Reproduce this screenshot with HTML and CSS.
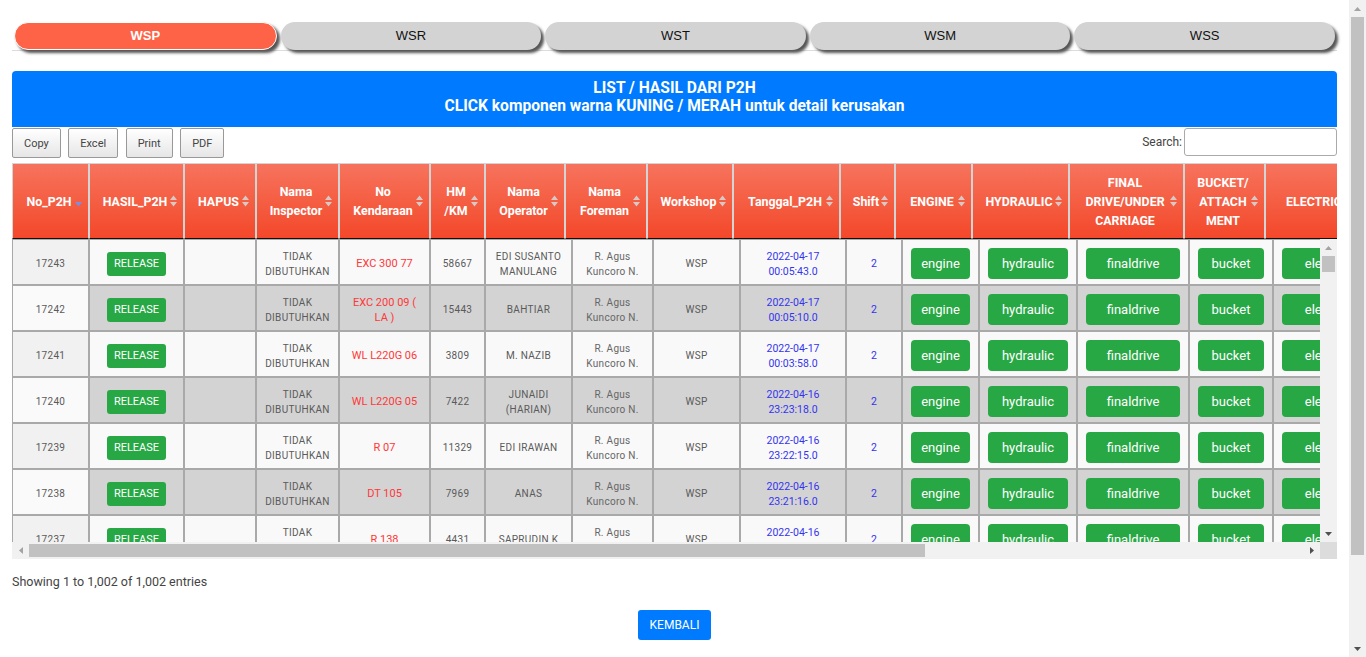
FILE: index.html
```html
<!DOCTYPE html>
<html>
<head>
<meta charset="utf-8">
<title>P2H</title>
<link rel="stylesheet" href="styles.css">
</head>
<body>
<div class="page">
  <nav class="tabs">
    <a class="tab active">WSP</a>
    <a class="tab">WSR</a>
    <a class="tab">WST</a>
    <a class="tab">WSM</a>
    <a class="tab">WSS</a>
  </nav>

  <div class="banner">LIST / HASIL DARI P2H<br>CLICK komponen warna KUNING / MERAH untuk detail kerusakan</div>

  <div class="toolbar">
    <div class="dt-buttons">
      <button class="dt-btn">Copy</button>
      <button class="dt-btn">Excel</button>
      <button class="dt-btn">Print</button>
      <button class="dt-btn">PDF</button>
    </div>
    <label class="search">Search:<input class="search-input" type="search"></label>
  </div>

  <div class="scroll-head">
    <table class="head-table">
      <colgroup><col><col><col><col><col><col><col><col><col><col><col><col><col><col><col><col></colgroup>
      <thead>
        <tr>
          <th><div class="hc"><span class="hl">No_P2H</span><svg class="sort" width="7" height="12" viewBox="0 0 7 12"><path d="M0 7h7l-3.5 4.5z" fill="#7d8de0"/></svg></div></th>
          <th><div class="hc"><span class="hl">HASIL_P2H</span><svg class="sort" width="7" height="12" viewBox="0 0 7 12"><path d="M0 5h7L3.5 .5z M0 7h7l-3.5 4.5z" fill="#d9c9c6"/></svg></div></th>
          <th><div class="hc"><span class="hl">HAPUS</span><svg class="sort" width="7" height="12" viewBox="0 0 7 12"><path d="M0 5h7L3.5 .5z M0 7h7l-3.5 4.5z" fill="#d9c9c6"/></svg></div></th>
          <th><div class="hc"><span class="hl">Nama<br>Inspector</span><svg class="sort" width="7" height="12" viewBox="0 0 7 12"><path d="M0 5h7L3.5 .5z M0 7h7l-3.5 4.5z" fill="#d9c9c6"/></svg></div></th>
          <th><div class="hc"><span class="hl">No<br>Kendaraan</span><svg class="sort" width="7" height="12" viewBox="0 0 7 12"><path d="M0 5h7L3.5 .5z M0 7h7l-3.5 4.5z" fill="#d9c9c6"/></svg></div></th>
          <th><div class="hc"><span class="hl">HM<br>/KM</span><svg class="sort" width="7" height="12" viewBox="0 0 7 12"><path d="M0 5h7L3.5 .5z M0 7h7l-3.5 4.5z" fill="#d9c9c6"/></svg></div></th>
          <th><div class="hc"><span class="hl">Nama<br>Operator</span><svg class="sort" width="7" height="12" viewBox="0 0 7 12"><path d="M0 5h7L3.5 .5z M0 7h7l-3.5 4.5z" fill="#d9c9c6"/></svg></div></th>
          <th><div class="hc"><span class="hl">Nama<br>Foreman</span><svg class="sort" width="7" height="12" viewBox="0 0 7 12"><path d="M0 5h7L3.5 .5z M0 7h7l-3.5 4.5z" fill="#d9c9c6"/></svg></div></th>
          <th><div class="hc"><span class="hl">Workshop</span><svg class="sort" width="7" height="12" viewBox="0 0 7 12"><path d="M0 5h7L3.5 .5z M0 7h7l-3.5 4.5z" fill="#d9c9c6"/></svg></div></th>
          <th><div class="hc"><span class="hl">Tanggal_P2H</span><svg class="sort" width="7" height="12" viewBox="0 0 7 12"><path d="M0 5h7L3.5 .5z M0 7h7l-3.5 4.5z" fill="#d9c9c6"/></svg></div></th>
          <th><div class="hc"><span class="hl">Shift</span><svg class="sort" width="7" height="12" viewBox="0 0 7 12"><path d="M0 5h7L3.5 .5z M0 7h7l-3.5 4.5z" fill="#d9c9c6"/></svg></div></th>
          <th><div class="hc"><span class="hl">ENGINE</span><svg class="sort" width="7" height="12" viewBox="0 0 7 12"><path d="M0 5h7L3.5 .5z M0 7h7l-3.5 4.5z" fill="#d9c9c6"/></svg></div></th>
          <th><div class="hc"><span class="hl">HYDRAULIC</span><svg class="sort" width="7" height="12" viewBox="0 0 7 12"><path d="M0 5h7L3.5 .5z M0 7h7l-3.5 4.5z" fill="#d9c9c6"/></svg></div></th>
          <th><div class="hc"><span class="hl">FINAL<br>DRIVE/UNDER<br>CARRIAGE</span><svg class="sort" width="7" height="12" viewBox="0 0 7 12"><path d="M0 5h7L3.5 .5z M0 7h7l-3.5 4.5z" fill="#d9c9c6"/></svg></div></th>
          <th><div class="hc"><span class="hl">BUCKET/<br>ATTACH<br>MENT</span><svg class="sort" width="7" height="12" viewBox="0 0 7 12"><path d="M0 5h7L3.5 .5z M0 7h7l-3.5 4.5z" fill="#d9c9c6"/></svg></div></th>
          <th><div class="hc"><span class="hl">ELECTRIC</span><svg class="sort" width="7" height="12" viewBox="0 0 7 12"><path d="M0 5h7L3.5 .5z M0 7h7l-3.5 4.5z" fill="#d9c9c6"/></svg></div></th>
        </tr>
      </thead>
    </table>
  </div>

  <div class="scroll-body">
    <div class="body-view">
      <table class="body-table">
        <colgroup><col><col><col><col><col><col><col><col><col><col><col><col><col><col><col><col></colgroup>
        <tbody>
          <tr class="odd">
            <td class="sorted">17243</td>
            <td><button class="btn-release">RELEASE</button></td>
            <td></td>
            <td>TIDAK<br>DIBUTUHKAN</td>
            <td class="red">EXC 300 77</td>
            <td>58667</td>
            <td>EDI SUSANTO<br>MANULANG</td>
            <td class="soft">R. Agus<br>Kuncoro N.</td>
            <td>WSP</td>
            <td class="blue">2022-04-17<br>00:05:43.0</td>
            <td class="blue">2</td>
            <td><button class="btn-comp">engine</button></td>
            <td><button class="btn-comp">hydraulic</button></td>
            <td><button class="btn-comp">finaldrive</button></td>
            <td><button class="btn-comp">bucket</button></td>
            <td><button class="btn-comp">electric</button></td>
          </tr>
          <tr class="even">
            <td class="sorted">17242</td>
            <td><button class="btn-release">RELEASE</button></td>
            <td></td>
            <td>TIDAK<br>DIBUTUHKAN</td>
            <td class="red">EXC 200 09 (<br>LA )</td>
            <td>15443</td>
            <td>BAHTIAR</td>
            <td class="soft">R. Agus<br>Kuncoro N.</td>
            <td>WSP</td>
            <td class="blue">2022-04-17<br>00:05:10.0</td>
            <td class="blue">2</td>
            <td><button class="btn-comp">engine</button></td>
            <td><button class="btn-comp">hydraulic</button></td>
            <td><button class="btn-comp">finaldrive</button></td>
            <td><button class="btn-comp">bucket</button></td>
            <td><button class="btn-comp">electric</button></td>
          </tr>
          <tr class="odd">
            <td class="sorted">17241</td>
            <td><button class="btn-release">RELEASE</button></td>
            <td></td>
            <td>TIDAK<br>DIBUTUHKAN</td>
            <td class="red">WL L220G 06</td>
            <td>3809</td>
            <td>M. NAZIB</td>
            <td class="soft">R. Agus<br>Kuncoro N.</td>
            <td>WSP</td>
            <td class="blue">2022-04-17<br>00:03:58.0</td>
            <td class="blue">2</td>
            <td><button class="btn-comp">engine</button></td>
            <td><button class="btn-comp">hydraulic</button></td>
            <td><button class="btn-comp">finaldrive</button></td>
            <td><button class="btn-comp">bucket</button></td>
            <td><button class="btn-comp">electric</button></td>
          </tr>
          <tr class="even">
            <td class="sorted">17240</td>
            <td><button class="btn-release">RELEASE</button></td>
            <td></td>
            <td>TIDAK<br>DIBUTUHKAN</td>
            <td class="red">WL L220G 05</td>
            <td>7422</td>
            <td>JUNAIDI<br>(HARIAN)</td>
            <td class="soft">R. Agus<br>Kuncoro N.</td>
            <td>WSP</td>
            <td class="blue">2022-04-16<br>23:23:18.0</td>
            <td class="blue">2</td>
            <td><button class="btn-comp">engine</button></td>
            <td><button class="btn-comp">hydraulic</button></td>
            <td><button class="btn-comp">finaldrive</button></td>
            <td><button class="btn-comp">bucket</button></td>
            <td><button class="btn-comp">electric</button></td>
          </tr>
          <tr class="odd">
            <td class="sorted">17239</td>
            <td><button class="btn-release">RELEASE</button></td>
            <td></td>
            <td>TIDAK<br>DIBUTUHKAN</td>
            <td class="red">R 07</td>
            <td>11329</td>
            <td>EDI IRAWAN</td>
            <td class="soft">R. Agus<br>Kuncoro N.</td>
            <td>WSP</td>
            <td class="blue">2022-04-16<br>23:22:15.0</td>
            <td class="blue">2</td>
            <td><button class="btn-comp">engine</button></td>
            <td><button class="btn-comp">hydraulic</button></td>
            <td><button class="btn-comp">finaldrive</button></td>
            <td><button class="btn-comp">bucket</button></td>
            <td><button class="btn-comp">electric</button></td>
          </tr>
          <tr class="even">
            <td class="sorted">17238</td>
            <td><button class="btn-release">RELEASE</button></td>
            <td></td>
            <td>TIDAK<br>DIBUTUHKAN</td>
            <td class="red">DT 105</td>
            <td>7969</td>
            <td>ANAS</td>
            <td class="soft">R. Agus<br>Kuncoro N.</td>
            <td>WSP</td>
            <td class="blue">2022-04-16<br>23:21:16.0</td>
            <td class="blue">2</td>
            <td><button class="btn-comp">engine</button></td>
            <td><button class="btn-comp">hydraulic</button></td>
            <td><button class="btn-comp">finaldrive</button></td>
            <td><button class="btn-comp">bucket</button></td>
            <td><button class="btn-comp">electric</button></td>
          </tr>
          <tr class="odd">
            <td class="sorted">17237</td>
            <td><button class="btn-release">RELEASE</button></td>
            <td></td>
            <td>TIDAK<br>DIBUTUHKAN</td>
            <td class="red">R 138</td>
            <td>4431</td>
            <td>SAPRUDIN K</td>
            <td class="soft">R. Agus<br>Kuncoro N.</td>
            <td>WSP</td>
            <td class="blue">2022-04-16<br>23:20:10.0</td>
            <td class="blue">2</td>
            <td><button class="btn-comp">engine</button></td>
            <td><button class="btn-comp">hydraulic</button></td>
            <td><button class="btn-comp">finaldrive</button></td>
            <td><button class="btn-comp">bucket</button></td>
            <td><button class="btn-comp">electric</button></td>
          </tr>
        </tbody>
      </table>
    </div>
    <div class="vbar">
      <div class="arrow"><svg width="7" height="4" viewBox="0 0 7 4"><path d="M0 4h7L3.5 0z" fill="#a3a3a3"/></svg></div>
      <div class="vthumb"></div>
      <div class="track"></div>
      <div class="arrow"><svg width="7" height="4" viewBox="0 0 7 4"><path d="M0 0h7L3.5 4z" fill="#505050"/></svg></div>
    </div>
    <div class="hbar">
      <div class="arrow"><svg width="4" height="7" viewBox="0 0 4 7"><path d="M4 0v7L0 3.5z" fill="#a3a3a3"/></svg></div>
      <div class="hthumb"></div>
      <div class="track"></div>
      <div class="arrow"><svg width="4" height="7" viewBox="0 0 4 7"><path d="M0 0v7L4 3.5z" fill="#505050"/></svg></div>
    </div>
    <div class="corner"></div>
  </div>

  <div class="info">Showing 1 to 1,002 of 1,002 entries</div>

  <div class="actions"><button class="kembali">KEMBALI</button></div>
</div>

<div class="page-scroll">
  <div class="arrow"><svg width="7" height="4" viewBox="0 0 7 4"><path d="M0 4h7L3.5 0z" fill="#a3a3a3"/></svg></div>
  <div class="pthumb"></div>
  <div class="track"></div>
  <div class="arrow"><svg width="7" height="4" viewBox="0 0 7 4"><path d="M0 0h7L3.5 4z" fill="#505050"/></svg></div>
</div>
</body>
</html>
```

FILE: styles.css
```css
* { box-sizing: border-box; }

html, body {
  margin: 0;
  height: 657px;
  overflow: hidden;
}

body {
  display: flex;
  background: #fff;
  color: #333;
  font-family: Roboto, "Liberation Sans", Arial, sans-serif;
}

.page {
  flex: 1;
  min-width: 0;
  padding: 22px 12px 0;
}

/* ---------- tabs ---------- */
.tabs {
  display: flex;
  border-bottom: 1px solid #dcdcdc;
}

.tab {
  flex: 1;
  margin: 0 2px;
  height: 28px;
  border-radius: 14px;
  background: #d3d3d3;
  color: #111;
  font: 13px/28px "Liberation Sans", Arial, sans-serif;
  text-align: center;
  box-shadow: 3px 3px 3px #555;
}

.tab.active {
  background: #ff6347;
  color: #fff;
  font-weight: 700;
  border: 1px solid #fff;
  line-height: 26px;
}

/* ---------- banner ---------- */
.banner {
  margin-top: 20px;
  height: 56px;
  padding: 8px 0 0;
  background: #007bff;
  color: #fff;
  font-weight: 700;
  font-size: 15.6px;
  line-height: 18px;
  text-align: center;
  border-radius: 4px 4px 0 0;
}

/* ---------- toolbar ---------- */
.toolbar {
  margin-top: 1px;
  display: flex;
  justify-content: space-between;
  align-items: flex-start;
}

.dt-buttons {
  display: flex;
  gap: 7.5px;
}

.dt-btn {
  height: 30px;
  padding: 0 11px;
  border: 1px solid #999;
  border-radius: 2px;
  background: linear-gradient(to bottom, #ffffff 0%, #e6e6e6 100%);
  color: #444;
  font: 11px Roboto, sans-serif;
}

.search {
  display: flex;
  align-items: center;
  font-size: 12px;
  color: #444;
}

.search-input {
  margin-left: 2px;
  width: 153px;
  height: 28px;
  border: 1px solid #aaa;
  border-radius: 3px;
  background: #fff;
}

/* ---------- table header ---------- */
.scroll-head {
  margin-top: 5px;
  overflow: hidden;
}

.head-table {
  border-collapse: separate;
  border-spacing: 0;
  table-layout: fixed;
  width: 1354px;
}

.head-table col:nth-child(1) { width: 77px; }
.head-table col:nth-child(2) { width: 95px; }
.head-table col:nth-child(3) { width: 72px; }
.head-table col:nth-child(4) { width: 83px; }
.head-table col:nth-child(5) { width: 91px; }
.head-table col:nth-child(6) { width: 55px; }
.head-table col:nth-child(7) { width: 80px; }
.head-table col:nth-child(8) { width: 82px; }
.head-table col:nth-child(9) { width: 86px; }
.head-table col:nth-child(10) { width: 107px; }
.head-table col:nth-child(11) { width: 55px; }
.head-table col:nth-child(12) { width: 77px; }
.head-table col:nth-child(13) { width: 97px; }
.head-table col:nth-child(14) { width: 115px; }
.head-table col:nth-child(15) { width: 81px; }
.head-table col:nth-child(16) { width: 101px; }

.head-table th {
  height: 76px;
  padding: 0 6px 0 10px;
  background: linear-gradient(to bottom, #f7735d 0%, #f45a3e 60%, #f4472a 100%);
  color: #fff;
  font-size: 12.4px;
  font-weight: 700;
  line-height: 19px;
  border: 1px solid #d4d4d4;
  border-bottom: 1px solid #111;
  vertical-align: middle;
  white-space: nowrap;
}

.hc {
  display: flex;
  align-items: center;
}

.hl {
  flex: 1;
  text-align: center;
}

.sort {
  flex: none;
  display: block;
}

/* ---------- table body ---------- */
.scroll-body {
  display: grid;
  grid-template-columns: 1fr 17px;
  grid-template-rows: 303px 17px;
}

.body-view {
  overflow: hidden;
}

.body-table {
  border-collapse: separate;
  border-spacing: 0;
  table-layout: fixed;
  width: 1367px;
}

.body-table col:nth-child(1) { width: 77px; }
.body-table col:nth-child(2) { width: 95px; }
.body-table col:nth-child(3) { width: 72px; }
.body-table col:nth-child(4) { width: 83px; }
.body-table col:nth-child(5) { width: 91px; }
.body-table col:nth-child(6) { width: 55px; }
.body-table col:nth-child(7) { width: 87px; }
.body-table col:nth-child(8) { width: 81px; }
.body-table col:nth-child(9) { width: 87px; }
.body-table col:nth-child(10) { width: 106px; }
.body-table col:nth-child(11) { width: 56px; }
.body-table col:nth-child(12) { width: 77px; }
.body-table col:nth-child(13) { width: 98px; }
.body-table col:nth-child(14) { width: 112px; }
.body-table col:nth-child(15) { width: 84px; }
.body-table col:nth-child(16) { width: 106px; }

.body-table td {
  height: 46px;
  padding: 8px 8px 5px;
  border: 1px solid #a9a9a9;
  text-align: center;
  vertical-align: middle;
  font-size: 10px;
  line-height: 15px;
  letter-spacing: 0.3px;
  color: #5a5a5a;
  white-space: nowrap;
}

.body-table tr.odd td { background: #f9f9f9; }
.body-table tr.even td { background: #d3d3d3; }
.body-table tr.odd td.sorted { background: #f1f1f1; }
.body-table tr.even td.sorted { background: #fafafa; }

.body-table td.red {
  color: #ff3838;
  font-size: 11px;
  letter-spacing: 0;
}

.body-table td.blue {
  color: #3434f0;
  font-size: 10.5px;
  letter-spacing: 0;
}

.body-table td.soft {
  color: #666;
}

.btn-release {
  height: 24px;
  padding: 0 7px;
  border: 0;
  border-radius: 3px;
  background: #28a745;
  color: #fff;
  font: 11px Roboto, sans-serif;
}

.btn-comp {
  display: block;
  width: 100%;
  height: 31px;
  border: 0;
  border-radius: 4px;
  background: #28a745;
  color: #fff;
  font: 13px Roboto, sans-serif;
  letter-spacing: 0;
}

/* ---------- fake scrollbars ---------- */
.arrow {
  flex: none;
  width: 17px;
  height: 17px;
  display: flex;
  align-items: center;
  justify-content: center;
}

.track { flex: 1; }

.vbar {
  background: #f1f1f1;
  display: flex;
  flex-direction: column;
}

.vthumb {
  height: 16px;
  margin: 0 2px;
  background: #c1c1c1;
}

.hbar {
  background: #f1f1f1;
  display: flex;
}

.hthumb {
  width: 896px;
  margin: 2px 0;
  background: #c1c1c1;
}

.corner { background: #dcdcdc; }

.page-scroll {
  flex: none;
  width: 17px;
  background: #f1f1f1;
  display: flex;
  flex-direction: column;
}

.pthumb {
  height: 538px;
  margin: 0 2px;
  background: #c1c1c1;
}

/* ---------- footer ---------- */
.info {
  padding-top: 15px;
  font-size: 12.5px;
  line-height: 16px;
  color: #444;
}

.actions {
  margin-top: 20px;
  display: flex;
  justify-content: center;
}

.kembali {
  height: 30px;
  padding: 0 11.5px;
  border: 0;
  border-radius: 3px;
  background: #007bff;
  color: #fff;
  font: 12px Roboto, sans-serif;
}
```
